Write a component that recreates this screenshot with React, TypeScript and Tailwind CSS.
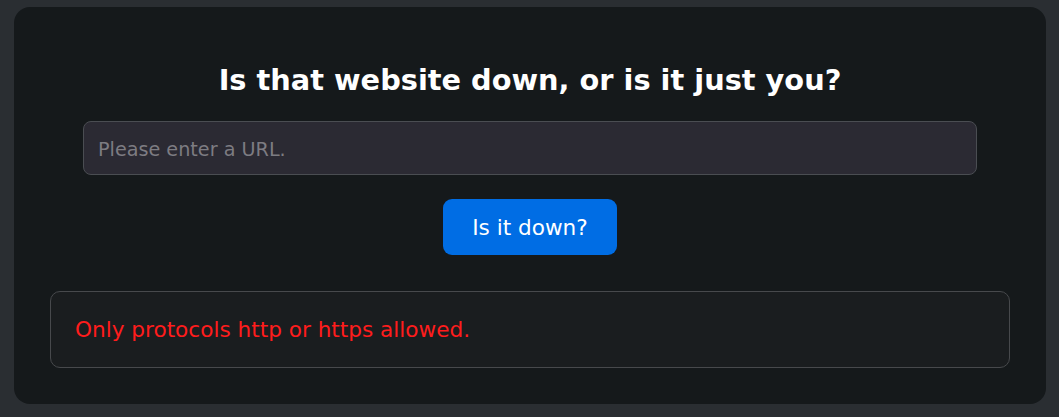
export default function App() {
  return (
    <div
      className="min-h-screen w-full bg-[#2a2e32] pl-[14px] pr-[13px] pt-[7px] pb-[13px]"
      style={{ fontFamily: '"DejaVu Sans", sans-serif' }}
    >
      <div className="flex flex-col items-center rounded-[16px] bg-[#15191b] pt-[56px] pb-[36px]">
        <h1 className="text-[28.8px] leading-[34px] font-bold text-white">
          Is that website down, or is it just you?
        </h1>

        <input
          type="text"
          placeholder="Please enter a URL."
          className="mt-[24px] h-[54px] w-[894px] rounded-[8px] border border-[#4a4d52] bg-[#2b2a33] px-[14px] pt-[2px] text-[19.2px] text-white placeholder:text-[#7d7c82] outline-none"
        />

        <button className="mt-[24px] h-[56px] w-[174px] rounded-[9px] bg-[#006de4] pt-[2px] text-[21.6px] text-white">
          Is it down?
        </button>

        <div className="mt-[36px] flex h-[77px] w-[960px] items-center rounded-[10px] border border-[#47494c] bg-[#1a1d1f] px-[24px] pt-[2px]">
          <p className="text-[21.6px] text-[#ff1c1c]">Only protocols http or https allowed.</p>
        </div>
      </div>
    </div>
  );
}
